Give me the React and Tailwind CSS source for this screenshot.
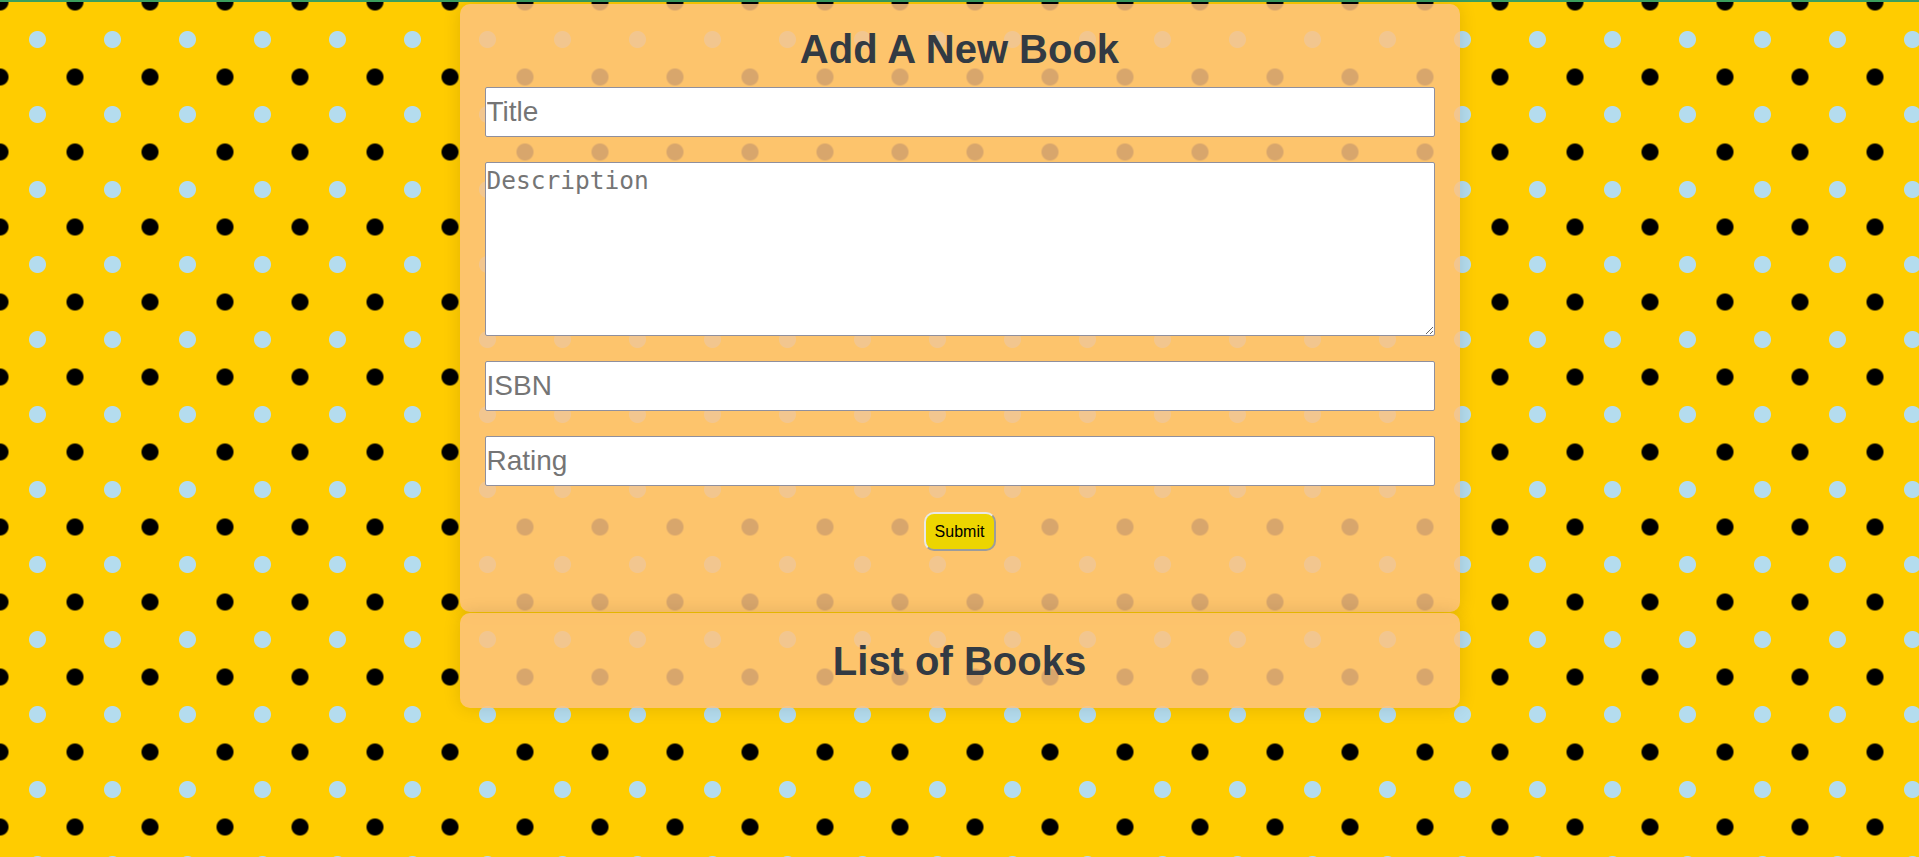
import { useState } from "react";

const FIELD =
  "block w-full h-[50px] bg-white border border-[#8f8f9d] rounded-[2px] px-[1px] text-[28px] text-black placeholder:text-[#757575] outline-none font-['Liberation_Sans',Arial,sans-serif]";

export default function App() {
  const [book, setBook] = useState({ title: "", description: "", isbn: "", rating: "" });

  const update = (key) => (e) => setBook({ ...book, [key]: e.target.value });

  return (
    <div
      className="min-h-screen border-t-2 border-[#3a9e5e] bg-[#ffcc00] bg-[image:radial-gradient(circle,#000_8px,transparent_9px),radial-gradient(circle,#b4dcee_8px,transparent_9px)] bg-size-[75px_75px] bg-position-[-37.5px_-37.5px,0_0] font-['Liberation_Sans',Arial,sans-serif]"
      data-testid="books-page"
    >
      <div className="w-[1000px] mx-auto pt-[2px]">
        {/* Add book form */}
        <section className="bg-[rgba(253,194,126,0.855)] rounded-[10px] shadow-[0_0_18px_rgba(0,0,0,0.12)] px-[25px] pt-[22px] pb-[61px]">
          <h1 className="text-center text-[40px] leading-[46px] font-bold text-[#323a43]">Add A New Book</h1>
          <form className="mt-[15px] flex flex-col gap-[25px]" onSubmit={(e) => e.preventDefault()}>
            <input className={FIELD} placeholder="Title" value={book.title} onChange={update("title")} />
            <textarea
              className="block w-full h-[174px] bg-white border border-[#8f8f9d] rounded-[2px] px-[1px] pt-0 text-[24.5px] text-black placeholder:text-[#757575] outline-none font-['DejaVu_Sans_Mono',monospace]"
              placeholder="Description"
              value={book.description}
              onChange={update("description")}
            />
            <input className={FIELD} placeholder="ISBN" value={book.isbn} onChange={update("isbn")} />
            <input className={FIELD} placeholder="Rating" value={book.rating} onChange={update("rating")} />
            <div className="flex justify-center pt-px">
              <button
                type="submit"
                className="w-[72px] h-[39px] rounded-[10px] bg-[#edd500] border-2 border-t-[#e8e8e8] border-l-[#e8e8e8] border-b-[#9c9c9c] border-r-[#9c9c9c] text-[16px] text-black"
              >
                Submit
              </button>
            </div>
          </form>
        </section>

        {/* Book list */}
        <section className="mt-px bg-[rgba(253,194,126,0.855)] rounded-[10px] shadow-[0_0_18px_rgba(0,0,0,0.12)] px-[25px] pt-[25px] pb-[24px]">
          <h2 className="text-center text-[40px] leading-[46px] font-bold text-[#323a43]">List of Books</h2>
        </section>
      </div>
    </div>
  );
}
